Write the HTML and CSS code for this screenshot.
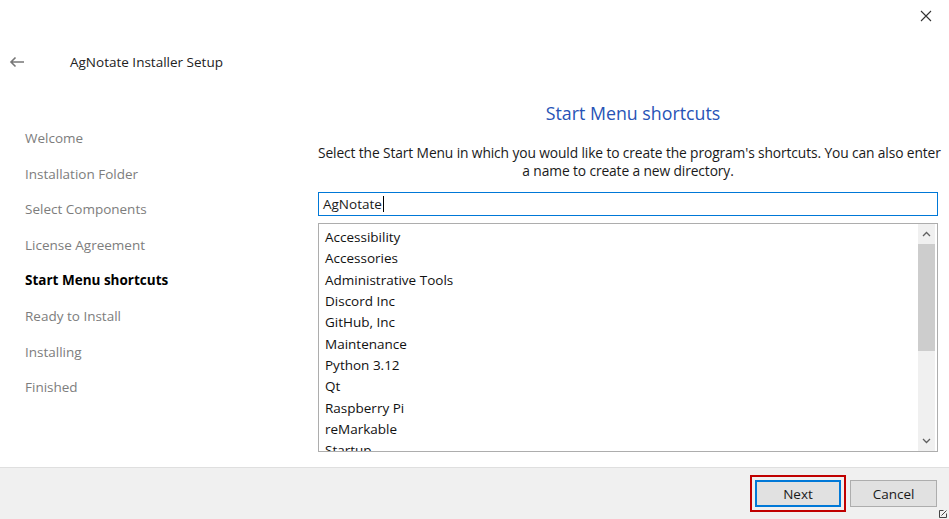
FILE: index.html
```html
<!DOCTYPE html>
<html lang="en">
<head>
  <meta charset="UTF-8">
  <title>AgNotate Installer Setup</title>
  <link rel="stylesheet" href="styles.css">
</head>
<body>
  <div class="window">
    <div class="close-row">
      <span class="close-btn">
        <svg width="12" height="12" viewBox="0 0 12 12"><path d="M1 1L11 11M11 1L1 11" stroke="#333" stroke-width="1.1"/></svg>
      </span>
    </div>

    <div class="title-row">
      <svg class="back" width="16" height="12" viewBox="0 0 16 12"><path d="M15 6H2M6.5 1.5L2 6l4.5 4.5" stroke="#777" stroke-width="1.6" fill="none"/></svg>
      <span class="title">AgNotate Installer Setup</span>
    </div>

    <div class="main">
      <ul class="steps">
        <li>Welcome</li>
        <li>Installation Folder</li>
        <li>Select Components</li>
        <li>License Agreement</li>
        <li class="active">Start Menu shortcuts</li>
        <li>Ready to Install</li>
        <li>Installing</li>
        <li>Finished</li>
      </ul>

      <div class="page">
        <h2>Start Menu shortcuts</h2>
        <p class="desc">Select the Start Menu in which you would like to create the program's shortcuts. You can also enter<br>a name to create a new directory.</p>
        <div class="field">AgNotate<span class="caret"></span></div>
        <div class="listbox">
          <ul class="items">
            <li>Accessibility</li>
            <li>Accessories</li>
            <li>Administrative Tools</li>
            <li>Discord Inc</li>
            <li>GitHub, Inc</li>
            <li>Maintenance</li>
            <li>Python 3.12</li>
            <li>Qt</li>
            <li>Raspberry Pi</li>
            <li>reMarkable</li>
            <li>Startup</li>
          </ul>
          <div class="scrollbar">
            <svg class="arrow" width="9" height="6" viewBox="0 0 9 6"><path d="M1 5l3.5-3.5L8 5" stroke="#606060" stroke-width="1.3" fill="none"/></svg>
            <div class="track"><div class="thumb"></div></div>
            <svg class="arrow" width="9" height="6" viewBox="0 0 9 6"><path d="M1 1l3.5 3.5L8 1" stroke="#606060" stroke-width="1.3" fill="none"/></svg>
          </div>
        </div>
      </div>
    </div>

    <div class="footer">
      <div class="highlight"><button class="btn primary">Next</button></div>
      <button class="btn">Cancel</button>
      <svg class="grip" width="8" height="8" viewBox="0 0 8 8"><path d="M0.5 0.5h4M0.5 0.5v7h7v-4M2.5 5.5l5-5" stroke="#444" stroke-width="1" fill="none"/></svg>
    </div>
  </div>
</body>
</html>
```

FILE: styles.css
```css
* {
  box-sizing: border-box;
  margin: 0;
  padding: 0;
}

body {
  font-family: "Open Sans", "Noto Sans", Arial, sans-serif;
  font-size: 13px;
  color: #1a1a1a;
  background: #fff;
}

.window {
  width: 949px;
  height: 519px;
  display: flex;
  flex-direction: column;
  overflow: hidden;
}

.close-row {
  height: 40px;
  display: flex;
  justify-content: flex-end;
}

.close-btn {
  width: 46px;
  height: 32px;
  display: flex;
  align-items: center;
  justify-content: center;
}

.title-row {
  height: 44px;
  display: flex;
  align-items: center;
  padding-left: 9px;
}

.back {
  margin-right: 45px;
}

.title {
  font-size: 13.5px;
  color: #222;
}

.main {
  flex: 1;
  display: flex;
}

.steps {
  list-style: none;
  width: 318px;
  padding: 37px 0 0 25px;
}

.steps li {
  height: 35.6px;
  line-height: 35.6px;
  font-size: 13.5px;
  color: #7d7d7d;
}

.steps li.active {
  color: #000;
  font-weight: bold;
}

.page {
  width: 620px;
  padding-top: 16px;
}

.page h2 {
  font-size: 17.8px;
  font-weight: normal;
  color: #2753b6;
  text-align: center;
  line-height: 26px;
  padding-left: 10px;
}

.desc {
  text-align: center;
  font-size: 13.8px;
  line-height: 18px;
  margin-top: 18px;
  letter-spacing: -0.12px;
  white-space: nowrap;
}

.field {
  margin-top: 12px;
  height: 24px;
  border: 1px solid #0078d7;
  padding-left: 4px;
  line-height: 22px;
  font-size: 13.5px;
  display: flex;
  align-items: center;
}

.caret {
  width: 1px;
  height: 16px;
  background: #000;
  margin-left: 1px;
}

.listbox {
  margin-top: 7px;
  height: 229px;
  border: 1px solid #adadad;
  display: flex;
  overflow: hidden;
}

.items {
  list-style: none;
  flex: 1;
  padding: 3px 0 0 6px;
}

.items li {
  height: 21.35px;
  line-height: 21.35px;
  font-size: 13.5px;
  color: #111;
}

.scrollbar {
  width: 17px;
  margin-right: 2px;
  background: #f0f0f0;
  display: flex;
  flex-direction: column;
  align-items: center;
}

.arrow {
  margin: 7px 0;
}

.track {
  flex: 1;
  width: 100%;
}

.thumb {
  height: 107px;
  background: #cdcdcd;
}

.footer {
  height: 52px;
  background: #f0f0f0;
  border-top: 1px solid #dfdfdf;
  display: flex;
  align-items: center;
  justify-content: flex-end;
  padding: 0 12px 0 0;
  position: relative;
}

.highlight {
  border: 2px solid #c00000;
  padding: 3px;
  margin-right: 4px;
}

.btn {
  font-family: inherit;
  font-size: 13.5px;
  color: #1a1a1a;
  width: 87px;
  height: 27px;
  background: #e1e1e1;
  border: 1px solid #adadad;
}

.btn.primary {
  width: 86px;
  border: 2px solid #0078d7;
}

.grip {
  position: absolute;
  right: 2px;
  bottom: 1px;
}
```
